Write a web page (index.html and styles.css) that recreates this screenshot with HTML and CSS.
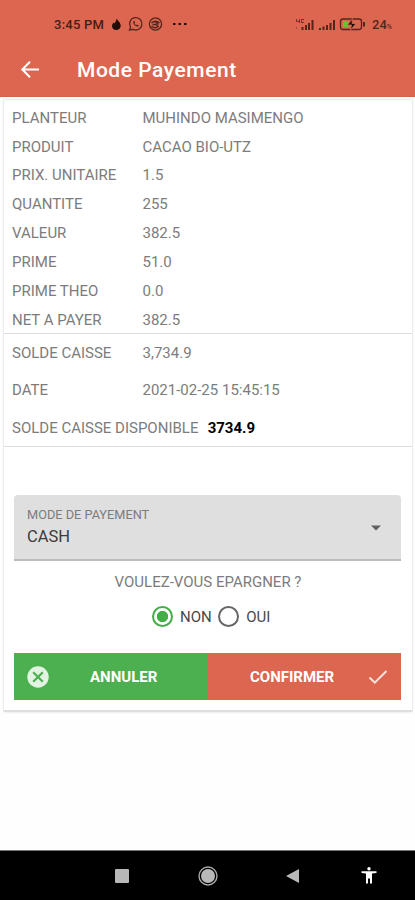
FILE: index.html
```html
<!DOCTYPE html>
<html lang="fr">
<head>
<meta charset="utf-8">
<title>Mode Payement</title>
<link rel="stylesheet" href="styles.css">
</head>
<body>
<header class="header">
  <div class="status">
    <span class="time">3:45 PM</span>
    <svg class="notifications" width="82" height="16" viewBox="0 0 82 16" fill="none" stroke="#54251c" stroke-width="1.3">
      <path d="M9.500 2.500C11 5 14 7 13.700 10C13.500 12.500 11.500 14 9.300 14C6.500 14 5 12 5 10C5 8.500 6 7.500 6.500 6.500L7.500 7.500C8.500 6 9.500 4.500 9.500 2.500Z" fill="#210e0a" stroke="none"/>
      <path d="M22.500 14.200L23.500 11A6.200 6.200 0 1 1 26 13.300Z"/>
      <path d="M26.300 5.200C25.500 7.500 28.500 11 31.400 10.500L31.700 9.300L30 8.500L29 9.200L27.500 7.500L28 6.500L27.400 5.100Z" fill="#54251c" stroke="none"/>
      <circle cx="48.500" cy="8" r="6.100"/>
      <path d="M44.500 7Q48.500 3.500 52.500 7M44.500 10Q48.500 13.500 51.500 10M45.500 8.500H49L51.500 11M48.500 6L51.500 8.500"/>
      <path d="M66 8h2.500M71.500 8H74M77 8h2.500" stroke="#210e0a" stroke-width="2"/>
    </svg>
    <svg class="device" width="76" height="16" viewBox="0 0 76 16">
      <g fill="#54251c">
        <path d="M2 3h1v2h2V3h1v4H5V6H2zM7 3h3v1H8v2h2v1H7z" opacity=".75"/>
        <path d="M2 11h1v2H2z" opacity=".4"/>
        <path d="M7.500 11h2v3h-2zM11 9h2v5h-2zM14 7h2v7h-2zM17.500 4h2v10h-2z"/>
        <path d="M25 12h2v2h-2zM28.500 10.500h2V14h-2zM32 9h2v5h-2zM35.500 7h2v7h-2zM39 4h2v10h-2z"/>
      </g>
      <rect x="46.500" y="3" width="21" height="10.500" rx="2.500" fill="none" stroke="#54251c" stroke-width="1.300"/>
      <path d="M69 6h2v4.500h-2z" fill="#54251c"/>
      <path d="M49 5.300h5.500v6H49z" fill="#68c332"/>
      <path d="M58.500 2.500L53.500 9h4l-1 5L62 7.500h-4z" fill="#210e0a" stroke="#dd6650" stroke-width=".8"/>
    </svg>
    <span class="charge">24<small>%</small></span>
  </div>
  <div class="appbar">
    <svg class="back" width="20" height="20" viewBox="0 0 20 20" fill="none" stroke="#fff" stroke-width="2"><path d="M19 9.500H2.500M10 1.800L2.300 9.500L10 17.200"/></svg>
    <h1>Mode Payement</h1>
  </div>
</header>
<main class="card">
  <dl class="details">
    <dt>PLANTEUR</dt><dd>MUHINDO MASIMENGO</dd>
    <dt>PRODUIT</dt><dd>CACAO BIO-UTZ</dd>
    <dt>PRIX. UNITAIRE</dt><dd>1.5</dd>
    <dt>QUANTITE</dt><dd>255</dd>
    <dt>VALEUR</dt><dd>382.5</dd>
    <dt>PRIME</dt><dd>51.0</dd>
    <dt>PRIME THEO</dt><dd>0.0</dd>
    <dt>NET A PAYER</dt><dd>382.5</dd>
  </dl>
  <section class="balance">
    <dl class="details loose">
      <dt>SOLDE CAISSE</dt><dd>3,734.9</dd>
      <dt>DATE</dt><dd>2021-02-25 15:45:15</dd>
    </dl>
    <p class="available">SOLDE CAISSE DISPONIBLE <strong>3734.9</strong></p>
  </section>
  <div class="select">
    <div>
      <div class="select-label">MODE DE PAYEMENT</div>
      <div class="select-value">CASH</div>
    </div>
    <svg width="10" height="6" viewBox="0 0 10 6"><path d="M0 .500h10L5 5.500z" fill="#606060"/></svg>
  </div>
  <p class="question">VOULEZ-VOUS EPARGNER ?</p>
  <div class="options">
    <span class="radio checked"></span><span class="option">NON</span>
    <span class="radio"></span><span class="option">OUI</span>
  </div>
  <div class="actions">
    <div class="button cancel">
      <svg width="22" height="22" viewBox="0 0 22 22"><circle cx="11" cy="11" r="10.700" fill="#e3f3e3"/><path d="M6.200 6.200l9.600 9.600M15.800 6.200l-9.600 9.600" stroke="#4caf50" stroke-width="2.200"/></svg>
      <span>ANNULER</span>
    </div>
    <div class="button confirm">
      <span>CONFIRMER</span>
      <svg width="20" height="16" viewBox="0 0 20 16"><path d="M1.500 8.500L6.800 13.700L18.500 2" fill="none" stroke="#fbe3dc" stroke-width="2"/></svg>
    </div>
  </div>
</main>
<nav class="navbar">
  <svg width="14" height="14" viewBox="0 0 14 14"><rect width="14" height="14" rx="1" fill="#b8b8b8"/></svg>
  <svg width="20" height="20" viewBox="0 0 20 20"><circle cx="10" cy="10" r="9" fill="none" stroke="#a8a8a8" stroke-width="1.400"/><circle cx="10" cy="10" r="7" fill="#b8b8b8"/></svg>
  <svg width="13" height="14" viewBox="0 0 13 14"><path d="M0 7L13 0V14z" fill="#b8b8b8"/></svg>
  <svg width="16" height="17" viewBox="0 0 16 17" fill="#fff"><circle cx="8" cy="1.800" r="1.700"/><path d="M.5 4.200h15v1.700l-4.500.5V16.500H9V11.500H7V16.500H5V6.400L.5 5.900z"/></svg>
</nav>
</body>
</html>
```
FILE: styles.css
```css
* { box-sizing: border-box; }
body {
  margin: 0;
  height: 900px;
  display: flex;
  flex-direction: column;
  background: #fefefe;
  font-family: Roboto, sans-serif;
  color: #7c7c7c;
  overflow: hidden;
}
h1, p, dl, dd { margin: 0; }
svg { display: block; flex: none; }
.header {
  height: 97px;
  flex: none;
  background: #dd6650;
  border-bottom: 1px solid #d5644f;
}
.status {
  height: 48px;
  padding-left: 54px;
  display: flex;
  align-items: center;
  color: #54251c;
}
.time { width: 52px; font-size: 13px; font-weight: 500; letter-spacing: .25px; color: #45201a; white-space: nowrap; }
.notifications { margin-left: 1px; }
.device { margin-left: 105px; }
.charge { margin-left: 2px; font-size: 13px; letter-spacing: 0; font-weight: 500; }
.charge small { font-size: 7px; }
.appbar { height: 44px; padding-left: 20px; display: flex; align-items: center; }
.appbar h1 {
  margin-left: 37px;
  color: #fff;
  font-size: 21px;
  font-weight: 500;
  letter-spacing: .54px;
  line-height: 24px;
}
.card {
  height: 613px;
  flex: none;
  margin: 2px 2px 0 3px;
  border: 1px solid #ececec;
  border-bottom: 2px solid #dedede;
  border-radius: 2px;
  background: #fff;
  box-shadow: 0 1px 2px #eee;
}
.details {
  display: grid;
  grid-template-columns: 130.500px 1fr;
  grid-auto-rows: 28.850px;
  align-items: center;
  padding: 3.300px 8px 0;
  font-size: 15px;
  height: 233px;
}
.balance {
  height: 114px;
  border-top: 1px solid #dedede;
  border-bottom: 1px solid #dedede;
}
.loose { height: 75px; padding-top: 0; grid-auto-rows: 37.500px; }
.available { padding-left: 8px; font-size: 15px; line-height: 38px; white-space: nowrap; }
.available strong { margin-left: 5.500px; color: #000; }
.select {
  height: 66px;
  margin: 48px 11px 0 10px;
  padding: 1px 20px 0 13px;
  display: flex;
  justify-content: space-between;
  align-items: center;
  background: #dfdfdf;
  border-bottom: 2px solid #bcbcbc;
  border-radius: 4px 4px 0 0;
}
.select-label { font-size: 12.750px; line-height: 18px; }
.select-value { font-size: 16.500px; line-height: 26px; color: #3c3c3c; }
.question { margin-top: 11px; text-align: center; font-size: 15px; line-height: 20px; }
.options { height: 30px; margin-top: 9px; padding-left: 148px; display: flex; align-items: center; font-size: 15px; color: #484848; }
.radio { width: 21px; height: 21px; border: 2px solid #666; border-radius: 50%; }
.checked { border-color: #43ad48; background: radial-gradient(circle, #43ad48 5.300px, #fff 6px); }
.option { margin: 1px 6.500px 0 7px; }
.actions { height: 47px; margin: 22px 11px 0 10px; display: grid; grid-template-columns: 194px 1fr; }
.button { display: flex; align-items: center; color: #fff; font-size: 15px; font-weight: 700; }
.cancel { background: #4caf50; padding-left: 12.500px; }
.cancel span { margin-left: 41.500px; }
.confirm { background: #dd6650; padding: 0 13px 0 42px; justify-content: space-between; }
.navbar {
  height: 50px;
  margin-top: auto;
  padding-left: 115px;
  background: #000;
  border-top: 1px solid #777;
  display: grid;
  grid-template-columns: 83px 88px 75px 16px;
  align-items: center;
}
```
